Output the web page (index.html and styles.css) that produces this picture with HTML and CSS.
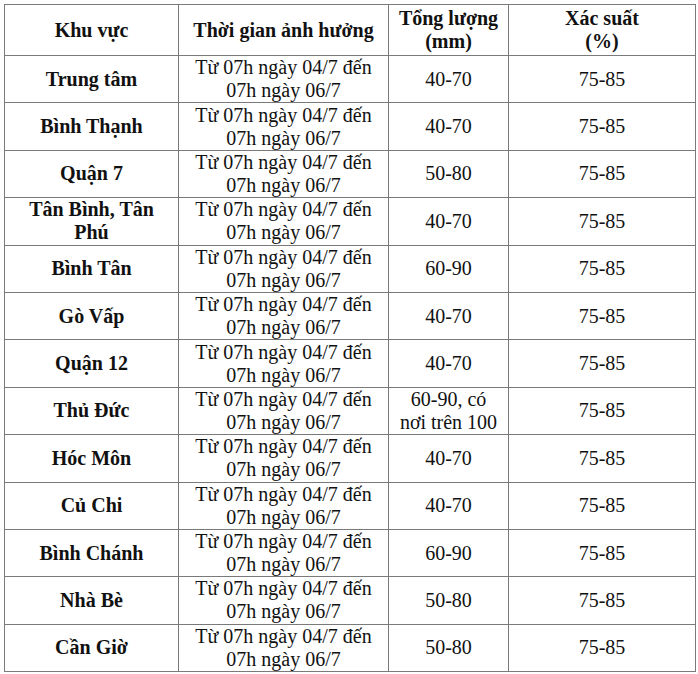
FILE: index.html
```html
<!DOCTYPE html>
<html lang="vi">
<head>
<meta charset="utf-8">
<link rel="stylesheet" href="styles.css">
</head>
<body>
<table class="rain">
  <colgroup>
    <col class="c1"><col class="c2"><col class="c3"><col class="c4">
  </colgroup>
  <thead>
    <tr class="head">
      <th>Khu vực</th>
      <th>Thời gian ảnh hưởng</th>
      <th>Tổng lượng<br>(mm)</th>
      <th>Xác suất<br>(%)</th>
    </tr>
  </thead>
  <tbody>
    <tr><th>Trung tâm</th><td>Từ 07h ngày 04/7 đến 07h ngày 06/7</td><td>40-70</td><td>75-85</td></tr>
    <tr><th>Bình Thạnh</th><td>Từ 07h ngày 04/7 đến 07h ngày 06/7</td><td>40-70</td><td>75-85</td></tr>
    <tr><th>Quận 7</th><td>Từ 07h ngày 04/7 đến 07h ngày 06/7</td><td>50-80</td><td>75-85</td></tr>
    <tr><th>Tân Bình, Tân Phú</th><td>Từ 07h ngày 04/7 đến 07h ngày 06/7</td><td>40-70</td><td>75-85</td></tr>
    <tr><th>Bình Tân</th><td>Từ 07h ngày 04/7 đến 07h ngày 06/7</td><td>60-90</td><td>75-85</td></tr>
    <tr><th>Gò Vấp</th><td>Từ 07h ngày 04/7 đến 07h ngày 06/7</td><td>40-70</td><td>75-85</td></tr>
    <tr><th>Quận 12</th><td>Từ 07h ngày 04/7 đến 07h ngày 06/7</td><td>40-70</td><td>75-85</td></tr>
    <tr><th>Thủ Đức</th><td>Từ 07h ngày 04/7 đến 07h ngày 06/7</td><td>60-90, có<br>nơi trên 100</td><td>75-85</td></tr>
    <tr><th>Hóc Môn</th><td>Từ 07h ngày 04/7 đến 07h ngày 06/7</td><td>40-70</td><td>75-85</td></tr>
    <tr><th>Củ Chi</th><td>Từ 07h ngày 04/7 đến 07h ngày 06/7</td><td>40-70</td><td>75-85</td></tr>
    <tr><th>Bình Chánh</th><td>Từ 07h ngày 04/7 đến 07h ngày 06/7</td><td>60-90</td><td>75-85</td></tr>
    <tr><th>Nhà Bè</th><td>Từ 07h ngày 04/7 đến 07h ngày 06/7</td><td>50-80</td><td>75-85</td></tr>
    <tr><th>Cần Giờ</th><td>Từ 07h ngày 04/7 đến 07h ngày 06/7</td><td>50-80</td><td>75-85</td></tr>
  </tbody>
</table>
</body>
</html>
```
FILE: styles.css
```css
html, body {
  margin: 0;
  padding: 0;
  background: #ffffff;
}
body {
  padding: 4px 0 0 4px;
  font-family: "Liberation Serif", "Times New Roman", serif;
  color: #111111;
}
.rain {
  border-collapse: collapse;
  table-layout: fixed;
  width: 691px;
  font-size: 20px;
  line-height: 23px;
}
.rain .c1 { width: 174px; }
.rain .c2 { width: 210px; }
.rain .c3 { width: 120px; }
.rain .c4 { width: 187px; }
.rain th,
.rain td {
  border: 1.5px solid #7a7a7a;
  text-align: center;
  vertical-align: middle;
  padding: 0 8px;
  overflow: hidden;
}
.rain th {
  font-weight: bold;
}
.rain .head th {
  height: 50px;
}
.rain tbody tr {
  height: 47.4px;
}
```
